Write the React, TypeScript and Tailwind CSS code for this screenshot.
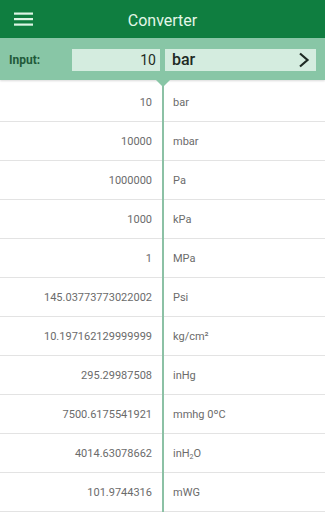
const rows: { value: string; unit: React.ReactNode }[] = [
  { value: '10', unit: 'bar' },
  { value: '10000', unit: 'mbar' },
  { value: '1000000', unit: 'Pa' },
  { value: '1000', unit: 'kPa' },
  { value: '1', unit: 'MPa' },
  { value: '145.03773773022002', unit: 'Psi' },
  { value: '10.197162129999999', unit: 'kg/cm²' },
  { value: '295.29987508', unit: 'inHg' },
  { value: '7500.6175541921', unit: 'mmhg 0ºC' },
  {
    value: '4014.63078662',
    unit: (
      <>
        inH<sub className="text-[7px]">2</sub>O
      </>
    ),
  },
  { value: '101.9744316', unit: 'mWG' },
]

function Row({ value, unit }: { value: string; unit: React.ReactNode }) {
  return (
    <div className="flex h-[39px] items-center border-b border-[#e3e3e3] pt-[3px] text-[11px] text-[#6b6b6b]">
      <div className="w-[162px] pr-[10px] text-right">{value}</div>
      <div className="pl-[11px]">{unit}</div>
    </div>
  )
}

export default function App() {
  return (
    <div
      className="relative h-[512px] w-[325px] overflow-hidden bg-white"
      style={{ fontFamily: 'Roboto, "Liberation Sans", sans-serif' }}
    >
      {/* Top bar */}
      <div className="flex h-[38px] items-center bg-[#0f7e40] px-[14px] shadow-[0_1px_0_#0a6a34]">
        <svg width="20" height="16" viewBox="0 0 20 16" aria-hidden="true">
          <rect x="0" y="1.5" width="19" height="2.2" fill="#dcf5e4" />
          <rect x="0" y="7" width="19" height="2.2" fill="#dcf5e4" />
          <rect x="0" y="12.5" width="19" height="2.2" fill="#dcf5e4" />
        </svg>
        <div className="flex-1 pr-[20px] pt-[3px] text-center text-[16px] text-[#e3f7e8]">Converter</div>
      </div>

      {/* Input band */}
      <div className="relative z-10 flex h-[42px] items-end bg-[#88c6a6] pb-[9px] pl-[9px] pr-[9px] shadow-[0_1px_2px_rgba(0,0,0,0.15)]">
        <span className="flex h-[22px] w-[63px] items-center text-[12px] font-bold text-[#1f5a3a]">Input:</span>
        <div className="flex h-[22px] w-[88px] items-center justify-end bg-[#d4ecdf] pr-[4px] text-[14px] text-[#1e2a24]">
          10
        </div>
        <div className="ml-[5px] flex h-[22px] flex-1 items-center justify-between bg-[#d4ecdf] pl-[7px] pr-[6px] text-[16px] font-medium text-[#1e2a24]">
          <span>bar</span>
          <svg width="12" height="16" viewBox="0 0 12 16" aria-hidden="true">
            <path d="M2 1.5 L9.5 8 L2 14.5" fill="none" stroke="#1e2a24" strokeWidth="2.2" />
          </svg>
        </div>
        <div className="absolute left-[156px] top-[42px] h-0 w-0 border-l-[7px] border-r-[7px] border-t-[7px] border-l-transparent border-r-transparent border-t-[#88c6a6]" />
      </div>

      {/* List */}
      <div className="relative mt-[3px]">
        <div className="absolute bottom-0 left-[162px] top-0 w-[2px] bg-[#8cc1a5]" />
        {rows.map((r) => (
          <Row key={r.value} value={r.value} unit={r.unit} />
        ))}
      </div>
    </div>
  )
}
